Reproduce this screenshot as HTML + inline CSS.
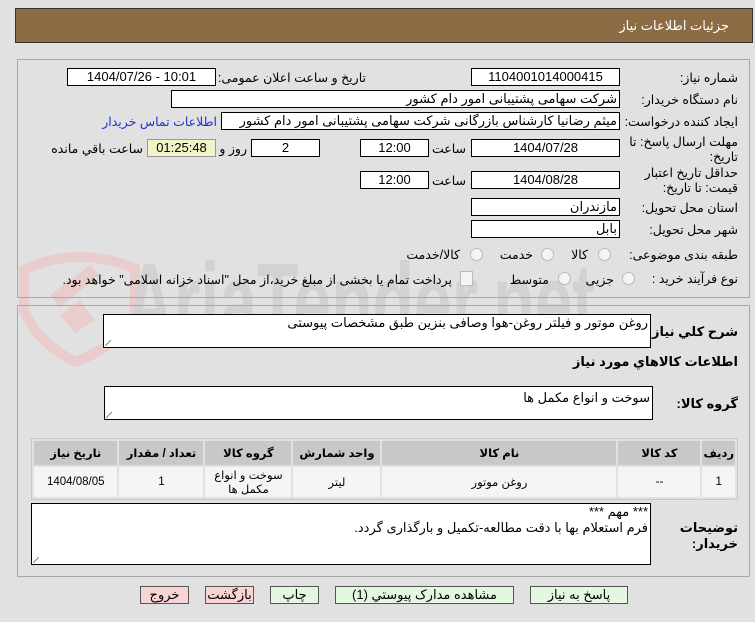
<!DOCTYPE html>
<html><head><meta charset="utf-8"><style>
body{margin:0;width:755px;height:622px;background:#e1e1e1;font-family:"Liberation Sans","DejaVu Sans",sans-serif;font-size:12px;color:#000;position:relative;overflow:hidden}
.a{position:absolute}
.box{position:absolute;background:#fff;border:1px solid #000;box-sizing:border-box;height:18px;line-height:16px;font-size:13px;text-align:center}
.r{direction:rtl;text-align:right;padding-right:2px}
.l{position:absolute;direction:rtl;text-align:right;white-space:nowrap;font-size:12.5px}
.b{font-weight:bold;font-size:13px}
.rad{position:absolute;width:11px;height:11px;border:1px solid #bbb;border-radius:50%;background:#f4f4f4}
.btn{position:absolute;top:586px;height:18px;border:1px solid #555;box-sizing:border-box;text-align:center;line-height:16px;font-size:13px;direction:rtl}
table{position:absolute;left:31px;top:438px;width:707px;border-collapse:separate;border-spacing:2px;border:1px solid #c8c8c8;background:#e1e1e1;direction:rtl}
td{text-align:center;font-size:11.5px}
th{background:#c8c8c8;height:22px;font-size:11.5px}
td{background:#f5f5f5;height:28px}
.grip{position:absolute;width:6px;height:6px;left:1px;bottom:1px;background:linear-gradient(135deg,transparent 45%,#888 45%,#888 55%,transparent 55%)}
</style></head><body>
<svg class="a" style="left:0;top:240px" width="620" height="130">
<path d="M24 30 Q75 5 135 28 L135 75 Q120 105 75 122 Q35 100 24 70Z" fill="none" stroke="#e9cccc" stroke-width="10"/>
<path d="M50 55 L90 25 L100 35 L60 67Z M60 75 L80 61 L95 80 L75 93Z" fill="#e9cccc"/>
<text x="125" y="100" font-family="Liberation Sans" font-weight="bold" font-size="110" fill="#d2d2d2" textLength="470" lengthAdjust="spacingAndGlyphs">AriaTender.net</text>
</svg>
<div class="a" style="left:15px;top:8px;width:738px;height:35px;background:#8b6c45;border:1px solid #333;box-sizing:border-box"></div>
<div class="l" style="right:26px;top:8px;color:#fff;font-size:13px;line-height:35px">جزئیات اطلاعات نیاز</div>
<div class="a" style="left:17px;top:59px;width:733px;height:239px;border:1px solid #a8a8a8;box-sizing:border-box"></div>
<div class="a" style="left:17px;top:305px;width:733px;height:272px;border:1px solid #a8a8a8;box-sizing:border-box"></div>

<div class="l" style="right:17px;top:70px">شماره نیاز:</div>
<div class="box" style="left:471px;top:68px;width:149px">1104001014000415</div>
<div class="l" style="right:389px;top:70px">تاریخ و ساعت اعلان عمومی:</div>
<div class="box" style="left:67px;top:68px;width:149px">1404/07/26 - 10:01</div>

<div class="l" style="right:17px;top:92px">نام دستگاه خریدار:</div>
<div class="box r" style="left:171px;top:90px;width:449px">شرکت سهامی پشتیبانی امور دام کشور</div>

<div class="l" style="right:17px;top:114px">ایجاد کننده درخواست:</div>
<div class="box r" style="left:221px;top:112px;width:399px">میثم رضانیا کارشناس بازرگانی شرکت سهامی پشتیبانی امور دام کشور</div>
<div class="l" style="right:538px;top:114px;color:#2233cc">اطلاعات تماس خریدار</div>

<div class="l" style="right:17px;top:135px;line-height:15px">مهلت ارسال پاسخ: تا<br>تاریخ:</div>
<div class="box" style="left:471px;top:139px;width:149px">1404/07/28</div>
<div class="l" style="right:289px;top:141px">ساعت</div>
<div class="box" style="left:360px;top:139px;width:69px">12:00</div>
<div class="box" style="left:251px;top:139px;width:69px">2</div>
<div class="l" style="right:508px;top:141px">روز و</div>
<div class="box" style="left:147px;top:139px;width:69px;background:#f3f3c8;border-color:#999">01:25:48</div>
<div class="l" style="right:612px;top:141px">ساعت باقي مانده</div>

<div class="l" style="right:17px;top:166px;line-height:15px">حداقل تاریخ اعتبار<br>قیمت: تا تاریخ:</div>
<div class="box" style="left:471px;top:171px;width:149px">1404/08/28</div>
<div class="l" style="right:289px;top:173px">ساعت</div>
<div class="box" style="left:360px;top:171px;width:69px">12:00</div>

<div class="l" style="right:17px;top:200px">استان محل تحویل:</div>
<div class="box r" style="left:471px;top:198px;width:149px">مازندران</div>
<div class="l" style="right:17px;top:222px">شهر محل تحویل:</div>
<div class="box r" style="left:471px;top:220px;width:149px">بابل</div>

<div class="l" style="right:17px;top:247px">طبقه بندی موضوعی:</div>
<div class="rad" style="left:598px;top:248px"></div><div class="l" style="right:167px;top:247px">کالا</div>
<div class="rad" style="left:541px;top:248px"></div><div class="l" style="right:222px;top:247px">خدمت</div>
<div class="rad" style="left:470px;top:248px"></div><div class="l" style="right:295px;top:247px">کالا/خدمت</div>

<div class="l" style="right:17px;top:271px">نوع فرآیند خرید :</div>
<div class="rad" style="left:622px;top:272px"></div><div class="l" style="right:141px;top:272px">جزیی</div>
<div class="rad" style="left:558px;top:272px"></div><div class="l" style="right:206px;top:272px">متوسط</div>
<div class="a" style="left:460px;top:271px;width:11px;height:13px;border:1px solid #bbb;background:#f4f4f4"></div>
<div class="l" style="right:303px;top:272px">پرداخت تمام یا بخشی از مبلغ خرید،از محل "اسناد خزانه اسلامی" خواهد بود.</div>

<div class="l b" style="right:17px;top:324px">شرح کلي نياز:</div>
<div class="box r" style="left:103px;top:314px;width:548px;height:34px;text-align:right">روغن موتور و فیلتر روغن-هوا وصافی بنزین طبق مشخصات پیوستی<div class="grip"></div></div>
<div class="l b" style="right:17px;top:354px">اطلاعات کالاهاي مورد نياز</div>
<div class="l b" style="right:17px;top:396px">گروه کالا:</div>
<div class="box r" style="left:104px;top:386px;width:549px;height:34px;line-height:22px">سوخت و انواع مکمل ها<div class="grip"></div></div>

<table><tr><th style="width:24px">ردیف</th><th style="width:80px">کد کالا</th><th style="width:232px">نام کالا</th><th style="width:85px">واحد شمارش</th><th style="width:84px">گروه کالا</th><th style="width:82px">تعداد / مقدار</th><th>تاریخ نیاز</th></tr>
<tr><td>1</td><td>--</td><td>روغن موتور</td><td>لیتر</td><td>سوخت و انواع<br>مکمل ها</td><td>1</td><td>1404/08/05</td></tr></table>

<div class="l b" style="right:17px;top:520px;line-height:16px">توضیحات<br>خریدار:</div>
<div class="box r" style="left:31px;top:503px;width:620px;height:62px;text-align:right;line-height:16px">*** مهم ***<br>فرم استعلام بها با دقت مطالعه-تکمیل و بارگذاری گردد.<div class="grip"></div></div>

<div class="btn" style="left:140px;width:49px;background:#f8d4d4">خروج</div>
<div class="btn" style="left:205px;width:49px;background:#f8d4d4">بازگشت</div>
<div class="btn" style="left:270px;width:49px;background:#e4f7e0">چاپ</div>
<div class="btn" style="left:335px;width:179px;background:#e4f7e0">مشاهده مدارک پیوستي (1)</div>
<div class="btn" style="left:530px;width:98px;background:#e4f7e0">پاسخ به نیاز</div>
</body></html>
